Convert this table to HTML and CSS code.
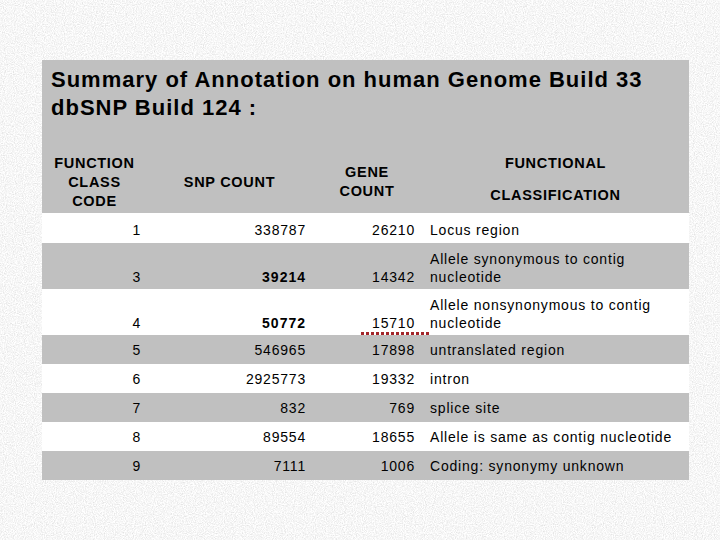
FILE: index.html
```html
<!DOCTYPE html>
<html>
<head>
<meta charset="utf-8">
<link rel="stylesheet" href="styles.css">
</head>
<body>
<svg class="texture" width="720" height="540" aria-hidden="true">
  <filter id="noise" x="0" y="0" width="100%" height="100%">
    <feTurbulence type="fractalNoise" baseFrequency="0.9" numOctaves="2" seed="4" stitchTiles="stitch"/>
    <feColorMatrix type="matrix" values="0.45 0 0 0 0.7  0.45 0 0 0 0.7  0.45 0 0 0 0.7  0 0 0 0 1"/>
  </filter>
  <rect width="720" height="540" filter="url(#noise)"/>
</svg>
<div class="panel">
  <div class="title">Summary of Annotation on human Genome Build 33<br>dbSNP Build 124 :</div>
  <table class="snp">
    <thead>
      <tr>
        <th class="c-code">FUNCTION<br>CLASS<br>CODE</th>
        <th class="c-snp">SNP COUNT</th>
        <th class="c-gene">GENE<br>COUNT</th>
        <th class="c-func wide">FUNCTIONAL<br>CLASSIFICATION</th>
      </tr>
    </thead>
    <tbody>
      <tr class="white first">
        <td class="c-code">1</td><td class="c-snp">338787</td><td class="c-gene">26210</td><td class="c-func">Locus region</td>
      </tr>
      <tr class="grey tall">
        <td class="c-code">3</td><td class="c-snp"><b>39214</b></td><td class="c-gene">14342</td><td class="c-func">Allele synonymous to contig<br>nucleotide</td>
      </tr>
      <tr class="white tall">
        <td class="c-code">4</td><td class="c-snp"><b>50772</b></td><td class="c-gene"><span class="squiggle">15710</span></td><td class="c-func">Allele nonsynonymous to contig<br>nucleotide</td>
      </tr>
      <tr class="grey">
        <td class="c-code">5</td><td class="c-snp">546965</td><td class="c-gene">17898</td><td class="c-func">untranslated region</td>
      </tr>
      <tr class="white">
        <td class="c-code">6</td><td class="c-snp">2925773</td><td class="c-gene">19332</td><td class="c-func">intron</td>
      </tr>
      <tr class="grey">
        <td class="c-code">7</td><td class="c-snp">832</td><td class="c-gene">769</td><td class="c-func">splice site</td>
      </tr>
      <tr class="white">
        <td class="c-code">8</td><td class="c-snp">89554</td><td class="c-gene">18655</td><td class="c-func">Allele is same as contig nucleotide</td>
      </tr>
      <tr class="grey">
        <td class="c-code">9</td><td class="c-snp">7111</td><td class="c-gene">1006</td><td class="c-func">Coding: synonymy unknown</td>
      </tr>
    </tbody>
  </table>
</div>
</body>
</html>
```
FILE: styles.css
```css
html, body {
  margin: 0;
  padding: 0;
}
body {
  width: 720px;
  height: 540px;
  overflow: hidden;
  background: #e8e8e8;
  font-family: "Liberation Sans", Arial, sans-serif;
  color: #000;
  position: relative;
}
.texture {
  position: absolute;
  left: 0;
  top: 0;
  z-index: 0;
  display: block;
}
.panel {
  position: relative;
  z-index: 1;
  margin: 60px 0 0 42px;
  width: 647px;
}
.title {
  background: #c0c0c0;
  font-weight: bold;
  font-size: 22px;
  letter-spacing: 1px;
  line-height: 28px;
  padding: 6px 0 24px 9px;
}
.snp {
  width: 647px;
  border-collapse: collapse;
  border-spacing: 0;
  table-layout: fixed;
}
.snp th {
  background: #c0c0c0;
  font-weight: bold;
  font-size: 14.5px;
  letter-spacing: 0.7px;
  line-height: 19px;
  text-align: center;
  vertical-align: middle;
  padding: 5px 0 0 0;
}
.snp th.wide {
  line-height: 32px;
  padding: 1px 0 2px 0;
}
.snp td {
  font-size: 14px;
  letter-spacing: 0.8px;
  line-height: 18px;
  vertical-align: bottom;
  padding: 6px 0 5px 0;
}
.snp tr.first td {
  padding-top: 8px;
  padding-bottom: 4px;
}
.snp tr.tall td {
  padding-top: 7px;
  padding-bottom: 3px;
}
.c-code { width: 105px; }
.c-snp { width: 165px; }
.c-gene { width: 110px; }
.c-func { width: 267px; }
.snp td.c-code { text-align: right; padding-right: 6px; }
.snp td.c-snp { text-align: right; padding-right: 6px; }
.snp td.c-gene { text-align: right; padding-right: 7px; }
.snp td.c-func { text-align: left; padding-left: 8px; }
.snp td b { font-weight: bold; letter-spacing: 1px; }
tr.white td { background: #ffffff; }
tr.grey td { background: #c0c0c0; }
.squiggle {
  position: relative;
}
.squiggle::after {
  content: "";
  position: absolute;
  left: -11px;
  right: -14px;
  bottom: -4px;
  height: 3px;
  background: repeating-linear-gradient(90deg, #a3262a 0 3px, transparent 3px 5px);
}
```
